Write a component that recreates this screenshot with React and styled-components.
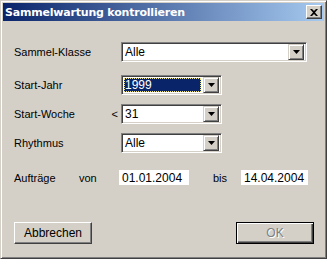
import React from 'react';
import styled, { createGlobalStyle } from 'styled-components';

const Global = createGlobalStyle`
  html, body { margin: 0; padding: 0; background: #D4D0C8; }
  body { width: 327px; height: 259px; overflow: hidden; }
`;

const Window = styled.div`
  box-sizing: border-box;
  width: 327px;
  height: 259px;
  background: #D4D0C8;
  border: 1px solid;
  border-color: #D4D0C8 #404040 #404040 #D4D0C8;
  box-shadow: inset 1px 1px #ffffff, inset -1px -1px #808080;
  padding: 2px;
  display: flex;
  flex-direction: column;
  font-family: "Liberation Sans", Arial, sans-serif;
  font-size: 11px;
  color: #000;
`;

const TitleBar = styled.div`
  height: 18px;
  flex: 0 0 18px;
  background: linear-gradient(to right, #0A246A 0%, #A6CAF0 100%);
  display: flex;
  align-items: center;
  justify-content: space-between;
  padding: 0 2px 0 2px;
`;

const Title = styled.span`
  color: #fff;
  font-weight: bold;
  font-size: 11px;
  font-family: "DejaVu Sans", "Liberation Sans", sans-serif;
  letter-spacing: -0.2px;
`;

const CloseButton = styled.div`
  box-sizing: border-box;
  width: 16px;
  height: 14px;
  background: #D4D0C8;
  border: 1px solid;
  border-color: #ffffff #404040 #404040 #ffffff;
  box-shadow: inset -1px -1px #808080;
  display: flex;
  align-items: center;
  justify-content: center;
`;

const Content = styled.div`
  flex: 1;
  display: flex;
  flex-direction: column;
  padding: 0 0 0 11px;
`;

const Row = styled.div`
  display: flex;
  align-items: center;
  margin-top: ${(p) => p.$top}px;
  height: ${(p) => p.$h || 20}px;
`;

const Label = styled.div`
  width: ${(p) => p.$w}px;
  flex: 0 0 ${(p) => p.$w}px;
  display: flex;
  justify-content: space-between;
  align-items: center;
`;

const Lt = styled.span`
  margin-right: 3px;
`;

const Combo = styled.div`
  box-sizing: border-box;
  width: ${(p) => p.$w}px;
  height: 20px;
  background: #fff;
  border: 1px solid;
  border-color: #808080 #ffffff #ffffff #808080;
  box-shadow: inset 1px 1px #404040, inset -1px -1px #D4D0C8;
  display: flex;
  align-items: center;
  padding: 2px;
`;

const ComboText = styled.div`
  flex: 1;
  height: 100%;
  display: flex;
  align-items: center;
  box-sizing: border-box;
  padding-left: 1px;
  margin-right: 2px;
  background: ${(p) => (p.$selected ? '#0A246A' : 'transparent')};
  color: ${(p) => (p.$selected ? '#fff' : '#000')};
  outline: ${(p) => (p.$selected ? '1px dotted #f0e68c' : 'none')};
  outline-offset: -1px;
  font-size: 12px;
`;

const DropButton = styled.div`
  box-sizing: border-box;
  width: 16px;
  height: 16px;
  flex: 0 0 16px;
  background: #D4D0C8;
  border: 1px solid;
  border-color: #D4D0C8 #404040 #404040 #D4D0C8;
  box-shadow: inset 1px 1px #ffffff, inset -1px -1px #808080;
  display: flex;
  align-items: center;
  justify-content: center;
`;

const Arrow = () => (
  <svg width="7" height="4" viewBox="0 0 7 4">
    <path d="M0 0h7L3.5 4z" fill="#000" />
  </svg>
);

const Field = styled.div`
  box-sizing: border-box;
  width: ${(p) => p.$w}px;
  height: 15px;
  background: #fff;
  display: flex;
  align-items: center;
  padding-left: 3px;
  font-size: 12px;
`;

const Text = styled.span`
  width: ${(p) => p.$w}px;
  flex: 0 0 ${(p) => p.$w}px;
  margin-left: ${(p) => p.$ml || 0}px;
  font-size: 11px;
`;

const ButtonRow = styled.div`
  display: flex;
  justify-content: space-between;
  margin-top: auto;
  margin-bottom: 12px;
  padding-right: 10px;
`;

const Button = styled.div`
  box-sizing: border-box;
  width: ${(p) => p.$w}px;
  height: 22px;
  background: #D4D0C8;
  display: flex;
  align-items: center;
  justify-content: center;
  font-size: 12px;
  border: 1px solid;
  border-color: ${(p) => (p.$default ? '#000 #000 #000 #000' : '#fff #404040 #404040 #fff')};
  box-shadow: ${(p) =>
    p.$default
      ? 'inset 1px 1px #fff, inset -1px -1px #404040, inset -2px -2px #808080'
      : 'inset -1px -1px #808080'};
  color: ${(p) => (p.$disabled ? '#808080' : '#000')};
  text-shadow: ${(p) => (p.$disabled ? '1px 1px #fff' : 'none')};
`;

const CloseIcon = () => (
  <svg width="8" height="7" viewBox="0 0 8 7">
    <path d="M0 0h2l2 2 2-2h2L5 3.5 8 7H6L4 5 2 7H0l3-3.5z" fill="#000" />
  </svg>
);

export default function App() {
  return (
    <>
      <Global />
      <Window>
        <TitleBar>
          <Title>Sammelwartung kontrollieren</Title>
          <CloseButton>
            <CloseIcon />
          </CloseButton>
        </TitleBar>
        <Content>
          <Row $top={21}>
            <Label $w={107}>Sammel-Klasse</Label>
            <Combo $w={186}>
              <ComboText>Alle</ComboText>
              <DropButton><Arrow /></DropButton>
            </Combo>
          </Row>
          <Row $top={13}>
            <Label $w={107}>Start-Jahr</Label>
            <Combo $w={101}>
              <ComboText $selected>1999</ComboText>
              <DropButton><Arrow /></DropButton>
            </Combo>
          </Row>
          <Row $top={9}>
            <Label $w={107}>
              <span>Start-Woche</span>
              <Lt>&lt;</Lt>
            </Label>
            <Combo $w={101}>
              <ComboText>31</ComboText>
              <DropButton><Arrow /></DropButton>
            </Combo>
          </Row>
          <Row $top={9}>
            <Label $w={107}>Rhythmus</Label>
            <Combo $w={101}>
              <ComboText>Alle</ComboText>
              <DropButton><Arrow /></DropButton>
            </Combo>
          </Row>
          <Row $top={17} $h={15}>
            <Text $w={65}>Aufträge</Text>
            <Text $w={40}>von</Text>
            <Field $w={70}>01.01.2004</Field>
            <Text $w={28} $ml={24}>bis</Text>
            <Field $w={67}>14.04.2004</Field>
          </Row>
          <ButtonRow>
            <Button $w={78}>Abbrechen</Button>
            <Button $w={78} $default $disabled>OK</Button>
          </ButtonRow>
        </Content>
      </Window>
    </>
  );
}
